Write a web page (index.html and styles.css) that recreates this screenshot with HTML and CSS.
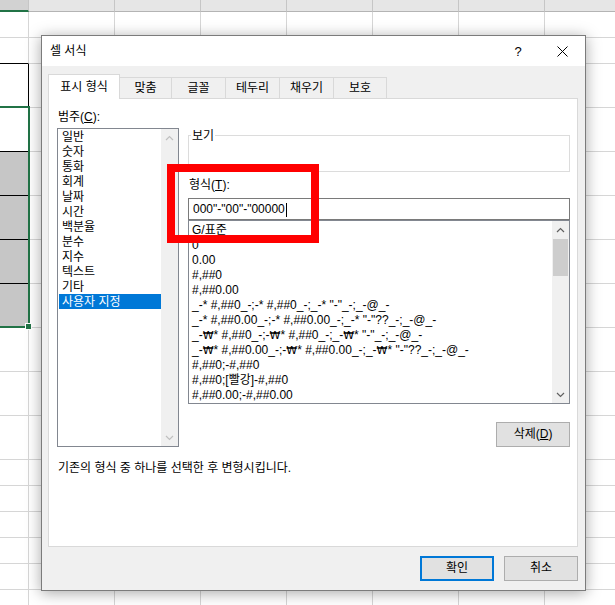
FILE: index.html
```html
<!DOCTYPE html>
<html lang="ko">
<head>
    <meta charset="UTF-8">
    <meta name="viewport" content="width=device-width, initial-scale=1.0">
    <title>셀 서식</title>
    <link rel="stylesheet" href="styles.css">
</head>
<body>
    <!-- Worksheet behind the dialog -->
    <div id="sheet" class="sheet"></div>
    <div class="selection"></div>
    <div class="fill-handle"></div>

    <!-- Format Cells dialog -->
    <div class="dialog">
        <div class="titlebar">
            <span class="title">셀 서식</span>
            <span class="help">?</span>
            <span class="close">
                <svg width="11" height="11" viewBox="0 0 11 11"><path d="M0.5 0.5 L10.5 10.5 M10.5 0.5 L0.5 10.5" stroke="#000" stroke-width="1" fill="none"/></svg>
            </span>
        </div>

        <div class="dialog-body">
            <div class="tabs">
                <div class="tab active">표시 형식</div>
                <div class="tab">맞춤</div>
                <div class="tab">글꼴</div>
                <div class="tab">테두리</div>
                <div class="tab">채우기</div>
                <div class="tab">보호</div>
            </div>

            <div class="panel">
                <div class="panel-main">
                    <div class="col-left">
                        <label class="field-label">범주(<u>C</u>):</label>
                        <div class="listbox category-list">
                            <ul class="items">
                                <li>일반</li>
                                <li>숫자</li>
                                <li>통화</li>
                                <li>회계</li>
                                <li>날짜</li>
                                <li>시간</li>
                                <li>백분율</li>
                                <li>분수</li>
                                <li>지수</li>
                                <li>텍스트</li>
                                <li>기타</li>
                                <li class="selected">사용자 지정</li>
                            </ul>
                            <div class="scrollbar disabled">
                                <div class="scroll-btn">
                                    <svg width="9" height="6" viewBox="0 0 9 6"><polyline points="1,5 4.5,1.5 8,5" fill="none" stroke-width="1.2"/></svg>
                                </div>
                                <div class="scroll-track"></div>
                                <div class="scroll-btn">
                                    <svg width="9" height="6" viewBox="0 0 9 6"><polyline points="1,1 4.5,4.5 8,1" fill="none" stroke-width="1.2"/></svg>
                                </div>
                            </div>
                        </div>
                    </div>

                    <div class="col-right">
                        <div class="groupbox">
                            <span class="group-title">보기</span>
                        </div>
                        <label class="field-label format-label">형식(<u>T</u>):</label>
                        <div class="textbox">000"-"00"-"00000<span class="caret"></span></div>
                        <div class="listbox format-list">
                            <ul class="items">
                                <li>G/표준</li>
                                <li>0</li>
                                <li>0.00</li>
                                <li>#,##0</li>
                                <li>#,##0.00</li>
                                <li>_-* #,##0_-;-* #,##0_-;_-* "-"_-;_-@_-</li>
                                <li>_-* #,##0.00_-;-* #,##0.00_-;_-* "-"??_-;_-@_-</li>
                                <li>_-<span class="won">₩</span>* #,##0_-;-<span class="won">₩</span>* #,##0_-;_-<span class="won">₩</span>* "-"_-;_-@_-</li>
                                <li>_-<span class="won">₩</span>* #,##0.00_-;-<span class="won">₩</span>* #,##0.00_-;_-<span class="won">₩</span>* "-"??_-;_-@_-</li>
                                <li>#,##0;-#,##0</li>
                                <li>#,##0;[빨강]-#,##0</li>
                                <li>#,##0.00;-#,##0.00</li>
                            </ul>
                            <div class="scrollbar">
                                <div class="scroll-btn">
                                    <svg width="9" height="6" viewBox="0 0 9 6"><polyline points="1,5 4.5,1.5 8,5" fill="none" stroke-width="1.2"/></svg>
                                </div>
                                <div class="scroll-track"><div class="scroll-thumb"></div></div>
                                <div class="scroll-btn">
                                    <svg width="9" height="6" viewBox="0 0 9 6"><polyline points="1,1 4.5,4.5 8,1" fill="none" stroke-width="1.2"/></svg>
                                </div>
                            </div>
                        </div>
                        <div class="delete-row">
                            <button class="btn">삭제(<u>D</u>)</button>
                        </div>
                    </div>
                </div>
                <p class="hint">기존의 형식 중 하나를 선택한 후 변형시킵니다.</p>
            </div>

            <div class="dialog-buttons">
                <button class="btn btn-default">확인</button>
                <button class="btn">취소</button>
            </div>
        </div>
    </div>

    <!-- Red highlight drawn over the screenshot -->
    <div class="annotation"></div>

    <script>
        // Visible worksheet rows, top to bottom (first one is the column header)
        const rowKinds = ['head', '', '', 'tall', 'tall', 'tall', 'tall', 'tall', 'tall', 'tall', 'tall', 'tall', '', '', '', '', '', ''];
        const columnCount = 8;
        const sheet = document.getElementById('sheet');

        let sheetHTML = '';
        rowKinds.forEach((kind, r) => {
            sheetHTML += `<div class="row ${kind}">`;
            for (let c = 0; c < columnCount; c++) {
                const classes = ['cell'];
                if (c === 0) {
                    classes.push('col-a');
                    if (r === 2 || (r >= 4 && r <= 7)) classes.push('edge-bottom');
                    if (r === 3) classes.push('edge-right');
                    if (r >= 5 && r <= 8) classes.push('shaded');
                }
                sheetHTML += `<div class="${classes.join(' ')}"></div>`;
            }
            sheetHTML += '</div>';
        });
        sheet.innerHTML = sheetHTML;
    </script>
</body>
</html>
```

FILE: styles.css
```css
* {
    margin: 0;
    padding: 0;
    box-sizing: border-box;
}

body {
    position: relative;
    width: 615px;
    height: 605px;
    overflow: hidden;
    background-color: #fff;
    font-family: "Liberation Sans", "Noto Sans CJK KR", sans-serif;
    font-size: 12px;
    color: #000;
}

/* Worksheet */
.sheet {
    width: 631px;
}

.row {
    display: flex;
    height: 26px;
}

.row.tall {
    height: 44px;
}

.row.head {
    height: 12px;
    background-color: #e6e6e6;
}

.cell {
    flex: none;
    width: 86px;
    border-right: 1px solid #d6d6d6;
    border-bottom: 1px solid #d6d6d6;
}

.cell.col-a {
    width: 29px;
}

.head .cell {
    border-right-color: #c6c6c6;
    border-bottom-color: #b4b4b4;
}

.head .cell.col-a {
    background-color: #d2d2d2;
    border-bottom: 2px solid #217346;
}

.cell.edge-bottom {
    border-bottom-color: #000;
}

.cell.edge-right {
    border-right-color: #000;
}

.cell.shaded {
    background-color: #c6c6c6;
}

.selection {
    position: absolute;
    left: -2px;
    top: 106px;
    width: 32px;
    height: 222px;
    border: 2px solid #217346;
}

.fill-handle {
    position: absolute;
    left: 25px;
    top: 323px;
    width: 7px;
    height: 7px;
    background-color: #217346;
    border: 1px solid #fff;
}

/* Dialog window */
.dialog {
    position: absolute;
    left: 41px;
    top: 35px;
    width: 545px;
    height: 556px;
    display: flex;
    flex-direction: column;
    background-color: #f0f0f0;
    border: 1px solid #7b7b7b;
    box-shadow: 0 2px 14px rgba(0, 0, 0, 0.35);
}

.titlebar {
    display: flex;
    align-items: center;
    height: 30px;
    background-color: #fff;
}

.title {
    flex: 1;
    padding-left: 8px;
    line-height: 17px;
}

.help {
    width: 42px;
    text-align: center;
    font-size: 13px;
}

.close {
    display: flex;
    justify-content: center;
    width: 46px;
}

.dialog-body {
    flex: 1;
    padding: 8px 7px 0 6px;
}

/* Tabs */
.tabs {
    position: relative;
    z-index: 1;
    display: flex;
    align-items: flex-end;
    height: 25px;
    margin-bottom: -1px;
}

.tab {
    width: 54px;
    height: 22px;
    line-height: 21px;
    text-align: center;
    background-color: #f0f0f0;
    border-top: 1px solid #d9d9d9;
    border-right: 1px solid #d9d9d9;
    border-bottom: 1px solid #d9d9d9;
}

.tab:nth-child(2) {
    width: 52px;
}

.tab:last-child {
    width: 53px;
}

.tab.active {
    width: 72px;
    height: 25px;
    line-height: 25px;
    background-color: #fff;
    border-left: 1px solid #d9d9d9;
    border-bottom: none;
}

.panel {
    height: 449px;
    padding: 0 7px 0 8px;
    background-color: #fff;
    border: 1px solid #d9d9d9;
}

.panel-main {
    display: grid;
    grid-template-columns: 122px 382px;
    column-gap: 9px;
}

.col-left {
    padding-top: 9px;
}

.field-label {
    display: block;
    padding-left: 1px;
    line-height: 19px;
    margin-bottom: 1px;
}

.format-label {
    margin: 4px 0 3px;
}

/* List boxes */
.listbox {
    display: flex;
    background-color: #fff;
    border: 1px solid #828790;
}

.category-list {
    height: 319px;
}

.format-list {
    height: 184px;
}

.items {
    flex: 1;
    list-style: none;
    overflow: hidden;
}

.items li {
    height: 15px;
    line-height: 17px;
    padding-left: 3px;
    white-space: nowrap;
}

.category-list .items {
    padding-left: 1px;
}

.category-list li.selected {
    background-color: #0078d7;
    color: #fff;
}

.format-list .items {
    padding-top: 1px;
}

.won {
    font-family: "DejaVu Sans", sans-serif;
    font-size: 11px;
    line-height: 0;
}

.scrollbar {
    display: flex;
    flex-direction: column;
    width: 17px;
    background-color: #f0f0f0;
}

.scroll-btn {
    display: flex;
    align-items: center;
    justify-content: center;
    height: 17px;
}

.scroll-btn svg {
    stroke: #606060;
}

.scrollbar.disabled .scroll-btn svg {
    stroke: #c0c0c0;
}

.scroll-track {
    flex: 1;
    padding: 1px;
}

.scroll-thumb {
    height: 37px;
    background-color: #cdcdcd;
}

/* Preview group and format input */
.groupbox {
    position: relative;
    height: 37px;
    margin-top: 36px;
    border: 1px solid #dcdcdc;
}

.group-title {
    position: absolute;
    left: 2px;
    top: -8px;
    padding: 0 1px;
    line-height: 17px;
    background-color: #fff;
}

.textbox {
    height: 22px;
    padding-left: 4px;
    line-height: 20px;
    border: 1px solid #7a7a7a;
    white-space: nowrap;
}

.caret {
    display: inline-block;
    width: 1px;
    height: 14px;
    margin-left: 1px;
    vertical-align: middle;
    background-color: #000;
}

.delete-row {
    display: flex;
    justify-content: flex-end;
    margin-top: 18px;
}

.hint {
    margin-top: 13px;
    padding-left: 1px;
    line-height: 17px;
}

/* Buttons */
.btn {
    width: 74px;
    height: 25px;
    line-height: 23px;
    font-family: inherit;
    font-size: 12px;
    color: #000;
    background-color: #e1e1e1;
    border: 1px solid #adadad;
}

.btn-default {
    line-height: 21px;
    border: 2px solid #0078d7;
}

.dialog-buttons {
    display: flex;
    justify-content: flex-end;
    gap: 10px;
    margin-top: 9px;
}

/* Annotation */
.annotation {
    position: absolute;
    z-index: 2;
    left: 167px;
    top: 164px;
    width: 152px;
    height: 79px;
    border: 8px solid #ff0000;
}
```
